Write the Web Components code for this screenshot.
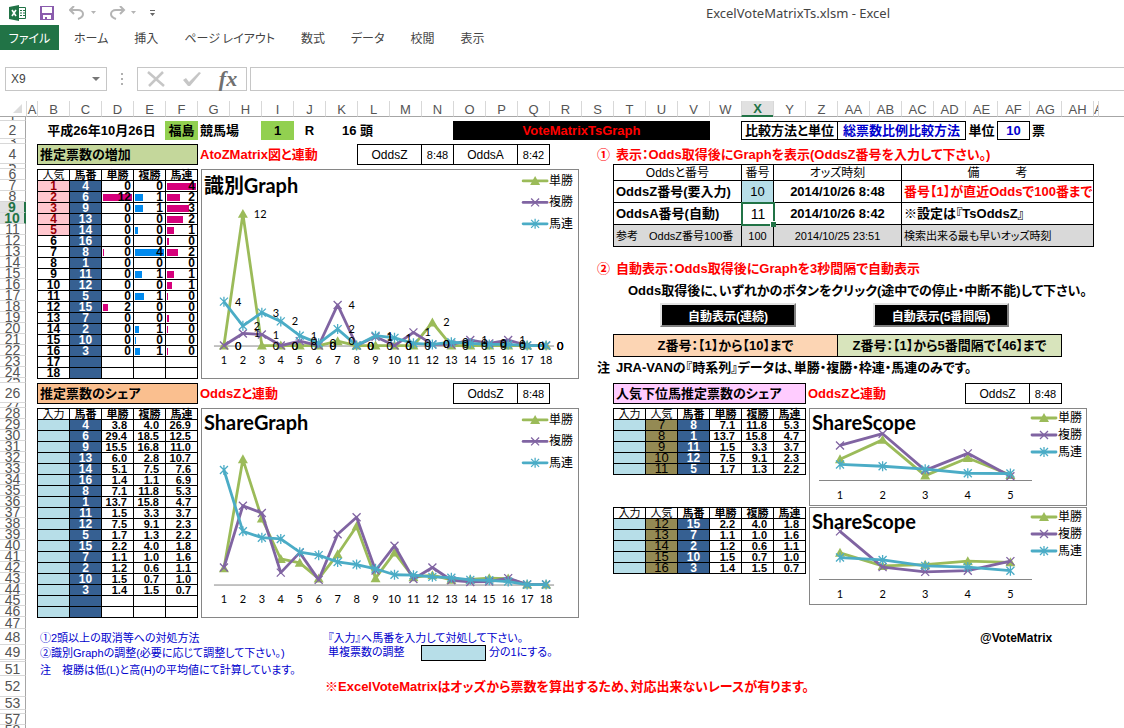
<!DOCTYPE html>
<html lang="ja">
<head>
<meta charset="utf-8">
<title>ExcelVoteMatrixTs.xlsm - Excel</title>
<style>
  html, body { margin: 0; height: 100%; }
  body {
    background: #fff; color: #000; overflow: hidden;
    font-family: "Liberation Sans", "Noto Sans CJK JP", sans-serif;
    font-size: 13px; font-feature-settings: "palt";
  }
</style>
</head>
<body>
<excel-window></excel-window>

<template id="window-tpl">
  <style>
    :host { display: flex; flex-direction: column; height: 100vh; overflow: hidden; }
    work-sheet { flex: 1; min-height: 0; margin-top: 10px; }
  </style>
  <title-bar>ExcelVoteMatrixTs.xlsm - Excel</title-bar>
  <ribbon-tabs></ribbon-tabs>
  <formula-bar></formula-bar>
  <work-sheet>
    <sheet-cell at="B2:E2" bold center>平成26年10月26日</sheet-cell>
    <sheet-cell at="F2" bold center fill style="--fill:#92d050">福島</sheet-cell>
    <sheet-cell at="G2:H2" bold>競馬場</sheet-cell>
    <sheet-cell at="I2" bold center fill style="--fill:#92d050">1</sheet-cell>
    <sheet-cell at="J2" bold center>R</sheet-cell>
    <sheet-cell at="K2:L2" bold center>16 頭</sheet-cell>
    <sheet-cell at="O2:V2" bold center fill style="--fill:#000;color:#f00">VoteMatrixTsGraph</sheet-cell>
    <sheet-cell at="X2:Z2" bold center box>比較方法と単位</sheet-cell>
    <sheet-cell at="AA2:AD2" bold center box style="color:#0000cd">総票数比例比較方法</sheet-cell>
    <sheet-cell at="AE2" bold center>単位</sheet-cell>
    <sheet-cell at="AF2" bold center box style="color:#0000cd">10</sheet-cell>
    <sheet-cell at="AG2" bold>票</sheet-cell>

    <sheet-cell at="B4:F4" bold box style="--fill:#c4d79b">推定票数の増加</sheet-cell>
    <sheet-cell at="G4:K4" bold style="color:#f00">AtoZMatrix図と連動</sheet-cell>
    <sheet-cell at="L4:M4" center box small>OddsZ</sheet-cell>
    <sheet-cell at="N4" center box tiny>8:48</sheet-cell>
    <sheet-cell at="O4:P4" center box small>OddsA</sheet-cell>
    <sheet-cell at="Q4" center box tiny>8:42</sheet-cell>

    <vote-table at="B6:F24" kind="growth"></vote-table>
    <line-chart at="G6:R24" kind="growth">識別Graph</line-chart>

    <sheet-cell at="S4" bold end style="color:#f00">①</sheet-cell>
    <sheet-cell at="T4:AG4" bold style="color:#f00">表示：Odds取得後にGraphを表示(OddsZ番号を入力して下さい。)</sheet-cell>
    <info-table at="T5:AH12"></info-table>
    <sheet-cell at="X9:X10" selected center>11</sheet-cell>

    <sheet-cell at="S14:S15" bold end style="color:#f00">②</sheet-cell>
    <sheet-cell at="T14:AG15" bold style="color:#f00">自動表示：Odds取得後にGraphを3秒間隔で自動表示</sheet-cell>
    <sheet-cell at="T16:AH17" bold indent>Odds取得後に、いずれかのボタンをクリック(途中での停止・中断不能)して下さい。</sheet-cell>
    <macro-button at="U18:Y20" indent>自動表示(連続)</macro-button>
    <macro-button at="AB18:AF20">自動表示(5番間隔)</macro-button>
    <sheet-cell at="T21:Z22" bold center box style="--fill:#fcd5b4">Z番号：【1】から【10】まで</sheet-cell>
    <sheet-cell at="AA21:AG22" bold center box style="--fill:#d8e4bc">Z番号：【1】から5番間隔で【46】まで</sheet-cell>
    <sheet-cell at="S23:S24" bold end>注</sheet-cell>
    <sheet-cell at="T23:AG24" bold>JRA-VANの『時系列』データは、単勝・複勝・枠連・馬連のみです。</sheet-cell>

    <sheet-cell at="B26:F26" bold box style="--fill:#fabf8f">推定票数のシェア</sheet-cell>
    <sheet-cell at="G26:K26" bold style="color:#f00">OddsZと連動</sheet-cell>
    <sheet-cell at="O26:P26" center box small>OddsZ</sheet-cell>
    <sheet-cell at="Q26" center box tiny>8:48</sheet-cell>
    <vote-table at="B28:F46" kind="share"></vote-table>
    <line-chart at="G28:R46" kind="share">ShareGraph</line-chart>

    <sheet-cell at="T26:Y26" bold box style="--fill:#ffccff">人気下位馬推定票数のシェア</sheet-cell>
    <sheet-cell at="Z26:AC26" bold style="color:#f00">OddsZと連動</sheet-cell>
    <sheet-cell at="AE26:AF26" center box small>OddsZ</sheet-cell>
    <sheet-cell at="AG26" center box tiny>8:48</sheet-cell>
    <vote-table at="T28:Y33" kind="low1"></vote-table>
    <line-chart at="Z28:AH36" kind="low1">ShareScope</line-chart>
    <vote-table at="T37:Y42" kind="low2"></vote-table>
    <line-chart at="Z37:AH45" kind="low2">ShareScope</line-chart>

    <sheet-cell at="B48:J48" note>①2頭以上の取消等への対処方法</sheet-cell>
    <sheet-cell at="B49:J49" note>②識別Graphの調整(必要に応じて調整して下さい。)</sheet-cell>
    <sheet-cell at="B51:J51" note>注　複勝は低(L)と高(H)の平均値にて計算しています。</sheet-cell>
    <sheet-cell at="K48:R48" note>『入力』へ馬番を入力して対処して下さい。</sheet-cell>
    <ratio-field at="K49:R49"></ratio-field>
    <sheet-cell at="AE48:AH48" bold small indent>@VoteMatrix</sheet-cell>
    <sheet-cell at="K52:Z52" bold flush style="color:#f00">※ExcelVoteMatrixはオッズから票数を算出するため、対応出来ないレースが有ります。</sheet-cell>
  </work-sheet>
</template>

<template id="title-tpl">
  <style>
    :host { display: flex; align-items: center; height: 25px; padding-left: 9px; color: #444; font: 13px "Noto Sans", sans-serif; }
    nav { display: flex; align-items: center; height: 22px; }
    button { border: 0; background: none; padding: 0; margin: 0 12px 0 0; display: flex; }
    button.arrow { margin-right: 14px; }
    svg { display: block; }
    .logo { margin-right: 13px; }
    h1 { flex: 1; margin: 0; padding-left: 305px; font-size: 13px; font-weight: 400; text-align: center; }
  </style>
  <nav aria-label="クイック アクセス">
    <svg class="logo" width="18" height="16" viewBox="0 0 18 16"><path fill="#217346" d="M0 2 10 0v16L0 14z"/><path fill="none" stroke="#217346" d="M10 2.500h6.500v11H10M11 5.500h2M14 5.500h2M11 8h2M14 8h2M11 10.500h2M14 10.500h2"/><path stroke="#fff" stroke-width="1.600" d="m3 5 4 6M7 5l-4 6"/></svg>
    <button aria-label="上書き保存" style="margin-right:15px"><svg width="14" height="14" viewBox="0 0 14 14"><path fill="#8a5cad" d="M0 0h14v14H0z"/><path fill="#fff" d="M2 1h10v6H2zM3 9h8v4H7v-2H5v2H3z"/></svg></button>
    <button aria-label="元に戻す" style="margin-right:6px"><svg width="16" height="14" viewBox="0 0 16 14" fill="none" stroke="#b4b4b4" stroke-width="2"><path d="M5 0 1 4l4 4M1 4h8c3 0 5 2 5 4s-2 4-5 5"/></svg></button>
    <button class="arrow" aria-label="履歴"><svg width="5" height="3"><path fill="#b4b4b4" d="M0 0h5L2.500 3z"/></svg></button>
    <button aria-label="やり直し" style="margin-right:5px"><svg width="16" height="14" viewBox="0 0 16 14" fill="none" stroke="#b4b4b4" stroke-width="2"><path d="m10 0 4 4-4 4M14 4H6C3 4 1 6 1 8s2 4 5 5"/></svg></button>
    <button class="arrow" aria-label="やり直し履歴"><svg width="5" height="3"><path fill="#b4b4b4" d="M0 0h5L2.500 3z"/></svg></button>
    <button aria-label="カスタマイズ"><svg width="5" height="6"><path fill="#666" d="M0 0h5v1H0zM0 3h5L2.500 6z"/></svg></button>
  </nav>
  <h1><slot></slot></h1>
</template>

<template id="tabs-tpl">
  <style>
    :host { display: flex; height: 25px; }
    button { border: 0; background: none; padding: 0 13px; font: 12px "Noto Sans CJK JP", sans-serif; font-feature-settings: "palt"; color: #444; white-space: nowrap; }
    .file { background: #217346; color: #fff; padding: 0; width: 59px; margin-right: 2px; }
  </style>
  <button class="file">ファイル</button><button>ホーム</button><button>挿入</button><button>ページ レイアウト</button><button>数式</button><button>データ</button><button>校閲</button><button>表示</button>
</template>

<template id="formula-tpl">
  <style>
    :host { display: flex; height: 24px; margin-top: 17px; padding-left: 5px; }
    div { box-sizing: border-box; border: 1px solid #c6c6c6; display: flex; align-items: center; }
    input { border: 0; outline: 0; padding: 0 5px; font: 12px "Liberation Sans", sans-serif; color: #444; min-width: 0; flex: 1; background: none; }
    button { border: 0; background: none; padding: 0; display: flex; justify-content: center; width: 37px; }
    .name { width: 102px; } .name button { width: 20px; }
    .dots { width: 30px; border: 0; justify-content: center; }
    .tools { width: 110px; }
    .text { flex: 1; margin-left: 3px; border-right: 0; }
  </style>
  <div class="name"><input aria-label="名前ボックス" value="X9"><button aria-label="名前の一覧"><svg width="8" height="4"><path fill="#777" d="M0 0h8L4 4z"/></svg></button></div>
  <div class="dots"><svg width="2" height="12" fill="#b0b0b0"><path d="M0 0h2v2H0zM0 5h2v2H0zM0 10h2v2H0z"/></svg></div>
  <div class="tools">
    <button aria-label="キャンセル"><svg width="18" height="16" viewBox="0 0 18 16" stroke="#c6c6c6" stroke-width="2.500"><path d="M1 1 17 15M16 1 2 15"/></svg></button>
    <button aria-label="入力"><svg width="20" height="16" viewBox="0 0 20 16"><path fill="#c6c6c6" d="m1 9 3-2 3 4L17 1l2 1L8 15H6z"/></svg></button>
    <button aria-label="関数の挿入" style="font:italic bold 22px/20px 'Liberation Serif',serif;color:#707070">fx</button>
  </div>
  <div class="text"><input aria-label="数式バー"></div>
</template>

<template id="sheet-tpl">
  <style>
    :host {
      display: grid; align-content: start; overflow: hidden;
      grid-template-columns: 26px 11px repeat(33, minmax(32px, 1fr)) 5px 26px;
      grid-template-rows: 16px 4px 18px 5px 20px 5px repeat(19, 11px) 5px 20px 5px repeat(19, 11px)
        12px 16px 15px 2px 14px 21px 13px 4px 0 0 11px 11px;
    }
    .col, .row { box-sizing: border-box; display: flex; align-items: center; justify-content: center; color: #555; font: 13px/14px "Liberation Sans", sans-serif; }
    .col { grid-row: 1; border-left: 1px solid #d8d8d8; border-bottom: 1px solid #a6a6a6; padding-top: 2px; }
    .col.clip { justify-content: flex-start; overflow: hidden; }
    .row { grid-column: 1; border-right: 1px solid #a6a6a6; border-bottom: 1px solid #d8d8d8; font-size: 14px; line-height: 10px; }
    .row.thin { overflow: hidden; }
    .col.on { background: #e1e1e1; color: #217346; font-weight: 700; border-bottom: 2px solid #217346; }
    .row.on { background: #e1e1e1; color: #217346; font-weight: 700; border-right: 2px solid #217346; }
    .corner { grid-area: 1 / 1; border-bottom: 1px solid #a6a6a6; display: flex; align-items: center; justify-content: flex-end; padding-right: 4px; }
  </style>
  <div class="corner"><svg width="9" height="9"><path fill="#dcdcdc" d="M9 0v9H0z"/></svg></div>
  <slot></slot>
</template>

<template id="cell-tpl">
  <style>
    :host { box-sizing: border-box; display: flex; align-items: center; min-width: 0; padding-left: 3px; white-space: nowrap; line-height: 14px; margin: 0 -1px -1px 0; background: var(--fill, transparent); }
    :host([bold]) { font-weight: 700; }
    :host([center]) { justify-content: center; padding: 0; }
    :host([end]) { justify-content: flex-end; padding-right: 4px; }
    :host([flush]) { padding-left: 0; }
    :host([box]) { border: 1px solid #000; padding-left: 2px; }
    :host([box][center]) { padding: 0; }
    :host([small]) { font-size: 12px; }
    :host([tiny]) { font-size: 11px; }
    :host([note]) { font-size: 11px; color: #0000cd; }
    :host([indent]) { padding-left: 15px; }
    :host([selected]) { position: relative; border: 2px solid #217346; background: #fff; margin: 0 -2px -2px 0; font-size: 14px; }
    :host([selected])::after { content: ""; position: absolute; right: -3px; bottom: -3px; width: 5px; height: 5px; background: #217346; border: 1px solid #fff; border-width: 1px 0 0 1px; }
  </style>
  <slot></slot>
</template>

<template id="button-tpl">
  <style>
    :host { display: flex; align-items: flex-start; padding: 2px 0 0 4px; }
    :host([indent]) { padding-left: 15px; }
    button { width: 136px; height: 24px; padding: 0; background: #000; color: #fff; border: 2px solid; border-color: #e3e3e3 #808080 #808080 #e3e3e3; font: bold 12px "Liberation Sans", "Noto Sans CJK JP", sans-serif; white-space: nowrap; }
  </style>
  <button><slot></slot></button>
</template>

<template id="ratio-tpl">
  <style>
    :host { display: flex; align-items: stretch; padding-left: 3px; gap: 3px; margin-bottom: -1px; font-size: 11px; line-height: 15px; color: #0000cd; white-space: nowrap; }
    label { width: 90px; }
    input { box-sizing: border-box; width: 65px; padding: 0; border: 1px solid #000; background: #b7dee8; }
  </style>
  <label for="ratio">単複票数の調整</label><input id="ratio"><span>分の1にする。</span>
</template>

<template id="info-tpl">
  <style>
    :host { display: block; margin: 0 -1px -1px 0; }
    table { width: 100%; table-layout: fixed; border-spacing: 0; border: solid #000; border-width: 1px 0 0 1px; white-space: nowrap; }
    th, td { padding: 0; height: 21px; line-height: 20px; border: solid #000; border-width: 0 1px 1px 0; text-align: center; font-weight: 700; }
    th { height: 15px; line-height: 14px; font-weight: 400; font-size: 12px; }
    .l { text-align: left; padding-left: 2px; }
    .in { background: #b7dee8; font-weight: 400; }
    .ref td { background: #d9d9d9; font-weight: 400; font-size: 11px; }
    .red { color: #f00; }
  </style>
  <table>
    <colgroup><col span="15"></colgroup>
    <tr><th colspan="4">Oddsと番号</th><th>番号</th><th colspan="4">オッズ時刻</th><th colspan="6">備　　　考</th></tr>
    <tr><td colspan="4" class="l">OddsZ番号(要入力)</td><td class="in">10</td><td colspan="4">2014/10/26 8:48</td><td colspan="6" class="l red">番号【1】が直近Oddsで100番まで</td></tr>
    <tr><td colspan="4" class="l">OddsA番号(自動)</td><td></td><td colspan="4">2014/10/26 8:42</td><td colspan="6" class="l">※設定は『TsOddsZ』</td></tr>
    <tr class="ref"><td colspan="4" class="l">参考　OddsZ番号100番</td><td>100</td><td colspan="4">2014/10/25 23:51</td><td colspan="6" class="l">検索出来る最も早いオッズ時刻</td></tr>
  </table>
</template>

<template id="table-tpl">
  <style>
    :host { display: block; margin: 0 -1px -1px 0; }
    table { width: 100%; table-layout: fixed; border-spacing: 0; border: solid #000; border-width: 1px 0 0 1px; font-weight: 700; }
    th, td { padding: 0; border: solid #000; border-width: 0 1px 1px 0; }
    span { display: block; height: 10px; line-height: 10px; white-space: nowrap; text-align: center; font-size: 12px; }
    th span { font-size: 11px; }
    th.plain { font-weight: 400; }
    .top { background: #ffc7ce; color: #9c0006; }
    .num { background: #366092; color: #fff; }
    .in { background: #b7dee8; }
    .low { background: #948a54; font-weight: 400; } .low span { font-size: 13px; }
    .bar span { text-align: right; padding-right: 2px; background: linear-gradient(var(--c), var(--c)) 1px 2px / var(--w) 7px no-repeat; }
    .pct span { text-align: right; padding-right: 6px; font-size: 11px; }
  </style>
  <table></table>
</template>

<template id="chart-tpl">
  <style>
    :host { display: block; box-sizing: border-box; margin: 0 2px -1px 4px; border: 1px solid #868686; background: #fff; overflow: hidden; }
    :host([kind^="low"]) { margin: 0 6px 1px 4px; }
    svg { display: block; width: 100%; height: 100%; font-family: Lato, "Noto Sans CJK JP", sans-serif; font-size: 11px; }
    .title { font-size: 20px; font-weight: 700; }
    .key { font-size: 12px; font-family: "Noto Sans CJK JP", sans-serif; }
    .mid { text-anchor: middle; }
  </style>
</template>

<script>
  const tpl = id => document.getElementById(id).content.cloneNode(true);
  const colNo = s => [...s].reduce((n, c) => n * 26 + c.charCodeAt(0) - 64, 0);
  const colName = n => (n > 26 ? String.fromCharCode(64 + Math.floor((n - 1) / 26)) : '') + String.fromCharCode(65 + (n - 1) % 26);

  class Part extends HTMLElement {
    connectedCallback() {
      if (this.shadowRoot) return;
      this.attachShadow({ mode: 'open' }).append(tpl(this.constructor.tpl));
      const at = this.getAttribute('at');
      if (at) {
        const [a, b = a] = at.split(':').map(s => s.match(/([A-Z]+)(\d+)/));
        this.style.gridArea = `${+a[2] + 1} / ${colNo(a[1]) + 1} / ${+b[2] + 2} / ${colNo(b[1]) + 2}`;
      }
      this.build?.();
    }
  }
  const define = (name, id, build) => {
    const C = class extends Part {};
    C.tpl = id;
    if (build) C.prototype.build = build;
    customElements.define(name, C);
  };

  const single = [3.8, 29.4, 15.5, 6.0, 5.1, 1.4, 7.1, 13.7, 1.5, 7.5, 1.7, 2.2, 1.1, 1.2, 1.5, 1.4];
  const place = [4.0, 18.5, 16.8, 2.8, 7.5, 1.1, 11.8, 15.8, 3.3, 9.1, 1.3, 4.0, 1.0, 0.6, 0.7, 1.5];
  const quin = [26.9, 12.5, 11.0, 10.7, 7.6, 6.9, 5.3, 4.7, 3.7, 2.3, 2.2, 1.8, 1.6, 1.1, 1.0, 0.7];
  const horse = [4, 6, 9, 13, 14, 16, 8, 1, 11, 12, 5, 15, 7, 2, 10, 3];
  const growth = [
    [0, 12, 0, 0, 0, 0, .4, 0, 0, 0, 0, 2.1, 0, 0, 0, 0, 0, 0],
    [0, 1.1, 1, 0, .4, 0, 3.7, 0, .8, 0, 1.2, .1, .1, .5, .2, .5, 0, 0],
    [4, 1.8, 3, 2.2, .9, .2, 1.5, 0, .9, .7, .2, .1, .3, .2, .1, .1, 0, 0]
  ];
  const shown = [
    [0, 12, 0, 0, 0, 0, 0, 0, 0, 0, 0, 2, 0, 0, 0, 0, 0, 0],
    [0, 1, 1, 0, 0, 0, 4, 0, 1, 0, 1, 0, 0, 1, 0, 1, 0, 0],
    [4, 2, 3, 2, 1, 0, 2, 0, 1, 1, 0, 0, 0, 0, 0, 0, 0, 0]
  ];
  const bars = [
    [0, 29, 0, 0, 0, 0, 1, 0, 0, 0, 0, 5, 0, 0, 0, 0],
    [0, 8, 8, 0, 3, 0, 29, 0, 7, 0, 9, 0, 0, 4, 1, 5],
    [29, 13, 22, 16, 7, 2, 11, 0, 7, 5, 1, 0, 2, 1, 0, 1]
  ];

  define('sheet-cell', 'cell-tpl');
  define('macro-button', 'button-tpl');
  define('ratio-field', 'ratio-tpl');
  define('info-table', 'info-tpl');
  define('title-bar', 'title-tpl');
  define('ribbon-tabs', 'tabs-tpl');
  define('formula-bar', 'formula-tpl');

  define('work-sheet', 'sheet-tpl', function () {
    for (let c = 1; c <= 36; c++) {
      const d = document.createElement('div');
      d.className = 'col' + (c === 24 ? ' on' : '') + (c === 35 ? ' clip' : '');
      d.style.gridColumn = c + 1;
      d.textContent = c < 36 ? colName(c) : '';
      this.shadowRoot.append(d);
    }
    const thin = [1, 3, 5, 25, 27];
    for (let r = 1; r <= 58; r++) {
      if (r > 54 && r < 57) continue;
      const d = document.createElement('div');
      d.className = 'row' + (r === 9 || r === 10 ? ' on' : '') + (thin.includes(r) ? ' thin' : '');
      d.style.gridRow = r + 1;
      d.textContent = r === 50 || r === 54 ? '' : r;
      this.shadowRoot.append(d);
    }
  });

  define('vote-table', 'table-tpl', function () {
    const kind = this.getAttribute('kind');
    const td = (v, cls, style = '') => `<td class="${cls}"${style && ` style="${style}"`}><span>${v ?? ''}</span></td>`;
    const pct = i => [single, place, quin].map(s => td(s[i]?.toFixed(1), 'pct')).join('');
    const th = (names) => '<tr>' + names.map(n => `<th class="${/人気|入力/.test(n) ? 'plain' : ''}"><span>${n}</span></th>`).join('') + '</tr>';
    let html = '';
    if (kind === 'growth') {
      html = th(['人気', '馬番', '単勝', '複勝', '馬連']);
      for (let i = 0; i < 18; i++)
        html += '<tr>' + td(i + 1, i < 5 ? 'top' : '') + td(horse[i], 'num') +
          [0, 1, 2].map(s => td(i < 16 ? shown[s][i] : '', 'bar', `--c:${s === 1 ? '#008aef' : '#d6007b'};--w:${bars[s][i] || 0}px`)).join('') + '</tr>';
    } else if (kind === 'share') {
      html = th(['入力', '馬番', '単勝', '複勝', '馬連']);
      for (let i = 0; i < 18; i++) html += '<tr>' + td('', 'in') + td(horse[i], 'num') + pct(i) + '</tr>';
    } else {
      const from = kind === 'low1' ? 6 : 11;
      html = th(['入力', '人気', '馬番', '単勝', '複勝', '馬連']);
      for (let i = from; i < from + 5; i++) html += '<tr>' + td('', 'in') + td(i + 1, 'low') + td(horse[i], 'num') + pct(i) + '</tr>';
    }
    this.shadowRoot.querySelector('table').innerHTML = html;
  });

  define('line-chart', 'chart-tpl', function () {
    const kind = this.getAttribute('kind');
    const low = kind.startsWith('low');
    const pad = s => [...s, 0, 0];
    const cut = s => kind === 'low1' ? s.slice(6, 11) : s.slice(11);
    const series = kind === 'growth' ? growth : [single, place, quin].map(low ? cut : pad);
    const scale = { growth: 11, share: 4.27, low1: 2.93, low2: 11.9 }[kind];
    const g = low
      ? { w: 276, h: 95, x0: 30, dx: 42.6, base: 71, a: 9, b: 222, lab: 90, lx: 221, ly: 9, ldy: 17 }
      : { w: 377, h: 208, x0: 22, dx: 19, base: 176, a: 12, b: 353, lab: 195, lx: 321, ly: 11, ldy: 21.5 };
    const colors = ['#9bbb59', '#8064a2', '#4bacc6'];
    const marker = (k, x, y) => k === 0
      ? `<path fill="${colors[0]}" d="M${x} ${y - 5}l5 9h-10z"/>`
      : `<path fill="none" stroke="${colors[k]}" stroke-width="1.300" d="M${x - 4} ${y - 4}l8 8m0-8l-8 8${k === 2 ? `M${x} ${y - 5}v10` : ''}"/>`;
    let s = `<path stroke="#868686" d="M${g.a} ${g.base + .5}H${g.b}"/>`;
    series.forEach((vals, k) => {
      const pts = vals.map((v, i) => [g.x0 + i * g.dx, g.base - v * scale]);
      s += `<polyline fill="none" stroke="${colors[k]}" stroke-width="2.800" stroke-linejoin="round" points="${pts.join(' ')}"/>`;
      s += pts.map(p => marker(k, ...p)).join('');
      const y = g.ly + k * g.ldy;
      s += `<path stroke="${colors[k]}" stroke-width="2.800" stroke-linecap="round" d="M${g.lx + 1} ${y}h24"/>` + marker(k, g.lx + 13, y);
      s += `<text class="key" x="${g.lx + 27}" y="${y + 4}">${['単勝', '複勝', '馬連'][k]}</text>`;
    });
    if (kind === 'growth') series.forEach((vals, k) => vals.forEach((v, i) => {
      s += `<text x="${g.x0 + i * g.dx + 11}" y="${g.base - v * scale + 4}">${shown[k][i]}</text>`;
    }));
    series[0].forEach((_, i) => s += `<text class="mid" x="${g.x0 + i * g.dx}" y="${g.lab}">${i + 1}</text>`);
    s += `<text class="title" x="2" y="${kind === 'growth' ? 23 : 21}">${this.textContent}</text>`;
    this.shadowRoot.append(document.createRange().createContextualFragment(
      `<svg viewBox="0 0 ${g.w} ${g.h}" preserveAspectRatio="xMinYMin meet" role="img" aria-label="${this.textContent}">${s}</svg>`));
  });

  define('excel-window', 'window-tpl');
</script>
</body>
</html>
